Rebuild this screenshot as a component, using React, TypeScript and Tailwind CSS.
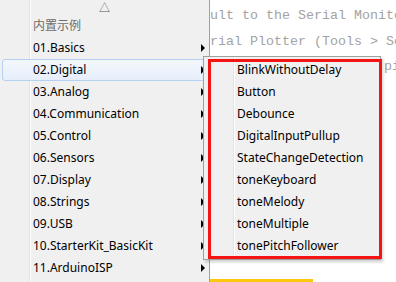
import React from "react";

const mainItems = [
  "01.Basics",
  "02.Digital",
  "03.Analog",
  "04.Communication",
  "05.Control",
  "06.Sensors",
  "07.Display",
  "08.Strings",
  "09.USB",
  "10.StarterKit_BasicKit",
  "11.ArduinoISP",
];

const subItems = [
  "BlinkWithoutDelay",
  "Button",
  "Debounce",
  "DigitalInputPullup",
  "StateChangeDetection",
  "toneKeyboard",
  "toneMelody",
  "toneMultiple",
  "tonePitchFollower",
];

function Arrow() {
  return (
    <span className="absolute right-[4px] top-1/2 -translate-y-1/2 w-0 h-0 border-y-[4px] border-y-transparent border-l-[4px] border-l-black" />
  );
}

export default function App() {
  const font = { fontFamily: '"Noto Sans", "Noto Sans CJK SC", sans-serif' };
  return (
    <div
      className="relative w-[396px] h-[282px] overflow-hidden bg-white flex"
      style={font}
    >
      {/* main menu */}
      <div className="relative w-[210px] h-full shrink-0 bg-[#f0f0f0] border-r border-[#a0a0a0] flex flex-col text-[12px] text-black">
        <div className="absolute left-[29px] top-0 bottom-0 w-px bg-[#e2e3e3]" />
        <div className="absolute left-[30px] top-0 bottom-0 w-px bg-white" />
        <div className="relative h-[15px] flex items-center justify-center text-[11px] text-[#555] leading-none">
          △
        </div>
        <div className="relative h-[22px] flex items-center pl-[33px] text-[#6d6d6d]">
          内置示例
        </div>
        {mainItems.map((t) => (
          <div key={t} className="relative h-[22px] flex items-center">
            {t === "02.Digital" && (
              <div className="absolute left-[2px] right-[2px] top-0 bottom-0 rounded-[3px] border border-[#b4d0f2] bg-gradient-to-b from-[#f3f7fc] to-[#e6eefa]" />
            )}
            <span className="relative pl-[33px] whitespace-nowrap">{t}</span>
            <Arrow />
          </div>
        ))}
      </div>

      {/* code area */}
      <div
        className="flex-1 flex flex-col min-w-0 text-[13.33px] leading-[25.5px] text-[#a3a3a3] whitespace-pre pt-[3px]"
        style={{ fontFamily: '"Liberation Mono", monospace' }}
      >
        <div>ult to the Serial Monitor.</div>
        <div>rial Plotter (Tools &gt; Serial Plotter menu).</div>
        <div className="pl-[174px]">pin</div>
        <div className="mt-auto w-[103px] h-[3px] bg-[#fcc80e]" />
      </div>

      {/* submenu */}
      <div className="absolute left-[203px] top-[56px] w-[178px] h-[204px] bg-[#f0f0f0] border border-[#a0a0a0] shadow-[2px_2px_3px_rgba(0,0,0,0.2)] pt-[2px] text-[12px] text-black">
        <div className="absolute left-[29px] top-0 bottom-0 w-px bg-[#e2e3e3]" />
        <div className="absolute left-[30px] top-0 bottom-0 w-px bg-white" />
        {subItems.map((t) => (
          <div key={t} className="relative h-[22px] flex items-center pl-[33px] whitespace-nowrap">
            {t}
          </div>
        ))}
      </div>

      {/* red annotation box */}
      <div className="absolute left-[208px] top-[59px] w-[174px] h-[200px] border-[3px] border-[#f51414]" />
    </div>
  );
}
